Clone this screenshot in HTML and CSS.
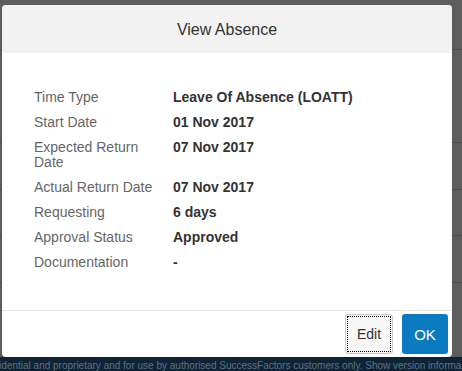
FILE: index.html
```html
<!DOCTYPE html>
<html lang="en">
<head>
<meta charset="utf-8">
<title>View Absence</title>
<link rel="stylesheet" href="styles.css">
</head>
<body>
<div class="screen">
  <div class="page">
    <div class="bg-row bg-top"></div>
    <div class="bg-row bg-r1"></div>
    <div class="bg-row bg-r2"></div>
    <div class="bg-row bg-r3"></div>
    <div class="bg-row bg-r4"></div>
    <div class="bg-row bg-last"></div>
  </div>
  <div class="footer-bar"><span class="footer-text">Confidential and proprietary and for use by authorised SuccessFactors customers only. Show version information</span></div>

  <div class="overlay">
    <div class="modal">
      <div class="modal-header">View Absence</div>
      <div class="modal-body">
        <div class="details">
          <div class="label">Time Type</div><div class="value">Leave Of Absence (LOATT)</div>
          <div class="label">Start Date</div><div class="value">01 Nov 2017</div>
          <div class="label">Expected Return Date</div><div class="value">07 Nov 2017</div>
          <div class="label">Actual Return Date</div><div class="value">07 Nov 2017</div>
          <div class="label">Requesting</div><div class="value">6 days</div>
          <div class="label">Approval Status</div><div class="value">Approved</div>
          <div class="label">Documentation</div><div class="value">-</div>
        </div>
      </div>
      <div class="modal-footer">
        <button class="btn btn-edit"><span class="focus-ring">Edit</span></button>
        <button class="btn btn-ok">OK</button>
      </div>
    </div>
  </div>
</div>
</body>
</html>
```

FILE: styles.css
```css
html, body {
  margin: 0;
  padding: 0;
}
body {
  width: 462px;
  height: 371px;
  overflow: hidden;
  background: #5d5d5d;
  font-family: "Liberation Sans", Arial, sans-serif;
}
.screen {
  position: relative;
  width: 462px;
  height: 371px;
  display: flex;
  flex-direction: column;
}
.page {
  height: 357px;
  display: flex;
  flex-direction: column;
  background: #5d5d5d;
}
.bg-row {
  border-bottom: 1px solid #4e4e4e;
  box-sizing: border-box;
}
.bg-top { height: 50px; }
.bg-r1 { height: 93px; }
.bg-r2 { height: 47px; }
.bg-r3 { height: 46px; }
.bg-r4 { height: 47px; }
.bg-last { flex: 1; border-bottom: none; }

.footer-bar {
  height: 14px;
  background: #0e2436;
  color: #5f7083;
  font-size: 10px;
  line-height: 14px;
  white-space: nowrap;
  overflow: hidden;
}
.footer-text {
  display: inline-block;
  margin-left: -22px;
  padding-top: 2px;
}

.overlay {
  position: absolute;
  left: 2px;
  top: 5px;
}
.modal {
  width: 450px;
  height: 352px;
  background: #ffffff;
  border-radius: 4px;
  overflow: hidden;
  display: flex;
  flex-direction: column;
}
.modal-header {
  height: 48px;
  background: #f2f2f2;
  color: #333333;
  font-size: 16px;
  line-height: 50px;
  text-align: center;
}
.modal-body {
  flex: 1;
  padding: 32px 32px 0 32px;
}
.details {
  display: grid;
  grid-template-columns: 125px 1fr;
  column-gap: 14px;
  font-size: 14px;
  line-height: 15px;
}
.label {
  color: #666666;
  padding: 5px 0;
}
.value {
  color: #333333;
  font-weight: bold;
  padding: 5px 0;
}
.modal-footer {
  border-top: 1px solid #e5e5e5;
  height: 43px;
  flex: none;
  display: flex;
  justify-content: flex-end;
  align-items: flex-start;
  gap: 9px;
  padding: 3px 4px 0 0;
}
.btn {
  height: 40px;
  border-radius: 3px;
  font-family: "Liberation Sans", Arial, sans-serif;
  font-size: 14px;
  cursor: pointer;
}
.btn-edit {
  width: 48px;
  background: #f7f7f7;
  border: 1px solid #c8c8c8;
  color: #333333;
  padding: 1px;
}
.focus-ring {
  display: flex;
  align-items: center;
  justify-content: center;
  height: 100%;
  border: 1px dotted #000000;
  box-sizing: border-box;
}
.btn-ok {
  width: 46px;
  background: #0a7bbf;
  border: none;
  color: #ffffff;
  font-size: 15px;
}
```
